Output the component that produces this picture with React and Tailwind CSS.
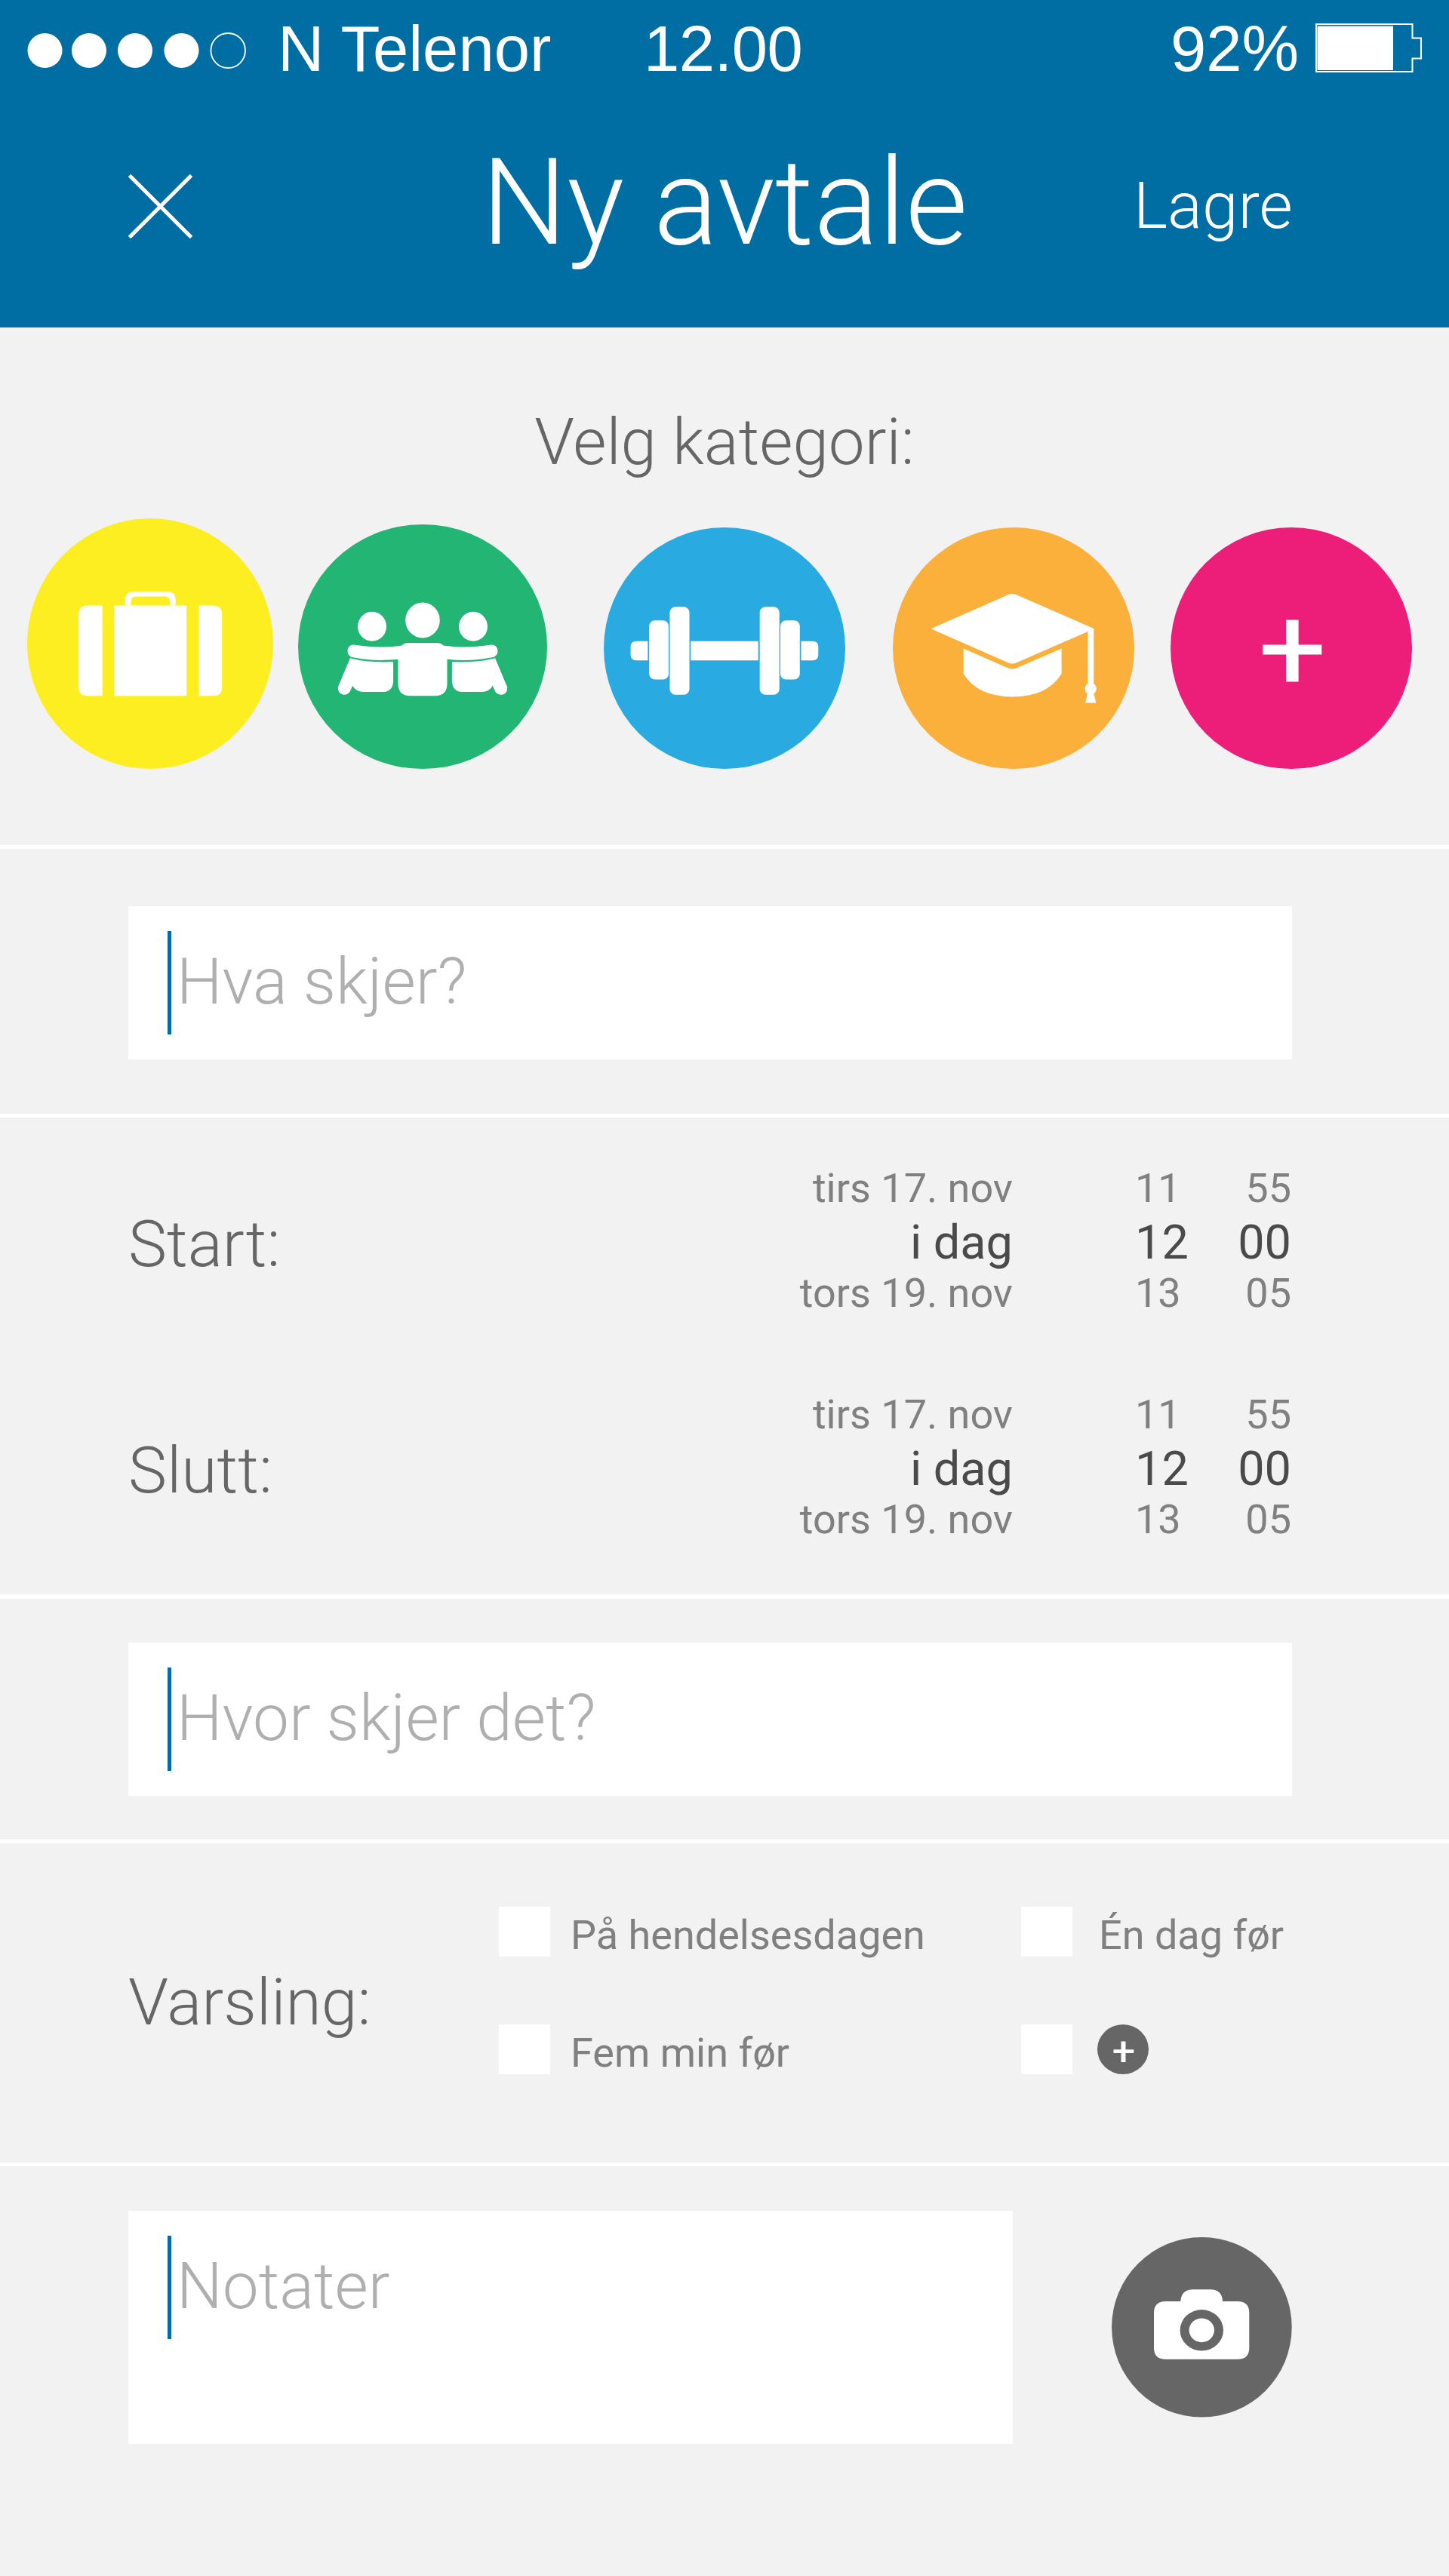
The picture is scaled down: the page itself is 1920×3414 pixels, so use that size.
const DATES = ['tirs 17. nov', 'i dag', 'tors 19. nov']
const HOURS = ['11', '12', '13']
const MINUTES = ['55', '00', '05']

export default function App() {
  return (
    <div className="w-[1920px] h-[3414px] bg-[#f2f2f2] font-['Roboto',sans-serif] text-[#666666] overflow-hidden">
      <header className="h-[434px] bg-[#006ea3] text-white">
        <StatusBar />
        <div className="flex items-start pl-[170px] pt-[80px]">
          <svg className="w-[85px] h-[85px] mt-[43px]" viewBox="0 0 85 85" stroke="#fff" strokeWidth="5">
            <path d="M1.5 1.5 83.5 83.5M83.5 1.5 1.5 83.5" />
          </svg>
          <h1 className="w-[864px] ml-[383px] mt-px font-light text-[159.5px] leading-none">Ny avtale</h1>
          <button className="mt-[43px] font-light text-[85.5px] leading-none">Lagre</button>
        </div>
      </header>

      {/* Category picker */}
      <section className="h-[691px] border-b-[5px] border-white pt-[110px]">
        <h2 className="text-center font-light text-[85.5px] leading-none">Velg kategori:</h2>
        <div className="flex items-end mt-[57px] pl-[36px]">
          <SuitcaseIcon />
          <PeopleIcon />
          <DumbbellIcon />
          <GraduationIcon />
          <AddIcon />
        </div>
      </section>

      <section className="h-[356px] border-b-[5px] border-white pt-[76px] pl-[170px]">
        <Field placeholder="Hva skjer?" />
      </section>

      {/* Start and end time */}
      <section className="h-[638px] border-b-[6px] border-white pt-[67px] pl-[170px] flex flex-col gap-[107px]">
        <TimeRow label="Start:" />
        <TimeRow label="Slutt:" />
      </section>

      <section className="h-[324px] border-b-[5px] border-white pt-[58px] pl-[170px]">
        <Field placeholder="Hvor skjer det?" />
      </section>

      {/* Reminders */}
      <section className="h-[428px] border-b-[5px] border-white pt-[84px] pl-[170px] flex items-start">
        <h2 className="w-[491px] pt-[84px] font-light text-[86px] leading-none">Varsling:</h2>
        <div className="grid grid-cols-[692px_auto] gap-y-[90px]">
          <Reminder label="På hendelsesdagen" />
          <Reminder label="Én dag før" wide />
          <Reminder label="Fem min før" />
          <div className="flex items-center gap-[33px]">
            <span className="w-[68px] h-[66px] bg-white" />
            <svg className="w-[68px] h-[66px]" viewBox="0 0 68 66">
              <ellipse cx="34" cy="33" rx="34" ry="33" fill="#666" />
              <path d="M31.5 22.5h6v10.8h10.8v4.6H37.5v12.1h-6V37.9H21.5v-4.6h10z" fill="#fff" />
            </svg>
          </div>
        </div>
      </section>

      {/* Notes */}
      <section className="pt-[59px] pl-[170px] flex items-start">
        <Field placeholder="Notater" multiline />
        <CameraIcon />
      </section>
    </div>
  )
}

function StatusBar() {
  return (
    <div className="flex items-start pt-[22px] pl-[36px] h-[108px] font-['Liberation_Sans',sans-serif] text-[85px] leading-[86px]">
      <svg className="w-[332px] h-[86px]" viewBox="36 22 332 86" fill="#fff">
        <ellipse cx="59.5" cy="67" rx="23" ry="23" />
        <ellipse cx="118" cy="67" rx="23" ry="23" />
        <ellipse cx="179" cy="67" rx="23" ry="23" />
        <ellipse cx="240.5" cy="67" rx="23" ry="23" />
        <ellipse cx="302.2" cy="67" rx="22.8" ry="23" fill="none" stroke="#fff" strokeWidth="1.8" />
      </svg>
      <span className="w-[485px]">N Telenor</span>
      <span className="w-[698px] tracking-[-0.5px]">12.00</span>
      <span className="w-[192px]">92%</span>
      <svg className="w-[142px] h-[86px]" viewBox="1743 22 142 86">
        <path d="M1744 32h127.5v18.5h11.5v27h-11.5v17.5H1744z" fill="none" stroke="#fff" strokeWidth="2" />
        <path d="M1745.5 34.5H1846v58.5H1745.5z" fill="#fff" />
      </svg>
    </div>
  )
}

function Field({ placeholder, multiline }) {
  return (
    <div className={`flex items-start pt-[33px] pl-[52px] gap-[7px] bg-white ${multiline ? 'w-[1172px] h-[309px]' : 'w-[1542px] h-[203px]'}`}>
      <span className="w-[5px] h-[137px] bg-[#006ea3]" />
      <span className="mt-[25px] font-light text-[85.5px] leading-none text-[#afafaf]">{placeholder}</span>
    </div>
  )
}

function TimeRow({ label }) {
  return (
    <div className="flex h-[193px]">
      <h2 className="w-[700px] pt-[58px] font-light text-[86px] leading-none">{label}</h2>
      <Wheel values={DATES} className="w-[472px] text-right" />
      <Wheel values={HOURS} className="w-[80px] ml-[162px]" />
      <Wheel values={MINUTES} className="w-[127px] text-right" />
    </div>
  )
}

// Three values under each other, the chosen one in the middle
function Wheel({ values, className }) {
  const [prev, current, next] = values
  return (
    <div className={className}>
      <p className="text-[54px] leading-none text-[#808080]">{prev}</p>
      <p className="mt-[13px] mb-[9px] text-[63px] leading-none text-[#4a4a4a]">{current}</p>
      <p className="text-[54px] leading-none text-[#808080]">{next}</p>
    </div>
  )
}

function Reminder({ label, wide }) {
  return (
    <div className={`flex items-center ${wide ? 'gap-[35px]' : 'gap-[27px]'}`}>
      <span className="w-[68px] h-[66px] bg-white" />
      <span className="pt-[10px] text-[54px] leading-[54px] text-[#808080]">{label}</span>
    </div>
  )
}

function SuitcaseIcon() {
  return (
    <svg className="w-[326px] h-[332px]" viewBox="36 686.5 326 332" fill="#fff">
      <ellipse cx="199" cy="852.5" rx="163" ry="166" fill="#fcee21" />
      <path d="M135.7 802v119.7H116q-11.8 0-11.8-11.8v-96q0-11.9 11.8-11.9z" />
      <path d="M151.2 802h96v119.7h-96z" />
      <path d="M263.2 802h19.2q11.8 0 11.8 11.9v96q0 11.8-11.8 11.8h-19.2z" />
      <path d="M165.8 802v-7.5q0-10.8 9.5-10.8h48q9.4 0 9.4 10.8v7.5h-7.6v-5q0-7-6.5-7h-38.5q-6.6 0-6.6 7v5z" />
    </svg>
  )
}

function PeopleIcon() {
  return (
    <svg className="w-[330px] h-[324px] ml-[33px]" viewBox="394.5 694.5 330 324" fill="#fff">
      <ellipse cx="559.5" cy="856.5" rx="165" ry="162" fill="#22b573" />
      <ellipse cx="492.5" cy="829.8" rx="19" ry="19.5" />
      <ellipse cx="559.5" cy="821.5" rx="22.8" ry="23.5" />
      <ellipse cx="626.5" cy="829.8" rx="19" ry="19.5" />
      <path d="M540 851.5h39q5 0 8 3.6 29 4.4 63.5-1.1c10.5-.8 11.7 15.3 1 16.7q-27 5.800-59.500 2.500v32.200q0 16.300-16.500 16.300h-32q-16.500 0-16.500-16.300v-32.200q-32.500 3.300-59.500-2.500c-10.700-1.400-9.500-17.500 1-16.700q34.500 5.500 63.500 1.100 3-3.600 8-3.600z" />
      <path d="M463.4 871.7q25 6.4 57.2 4.9v24.5q0 15.500-14 15.500h-25q-10.5 0-15-8.300-1.700 4.700-3.500 7.900-3.300 4.500-8.500 4-7.700-1.500-7.300-10z" />
      <path d="M655.6 871.7q-25 6.4-57.2 4.900v24.500q0 15.500 14 15.500h25q10.500 0 15-8.300 1.700 4.700 3.500 7.900 3.300 4.500 8.500 4 7.700-1.500 7.300-10z" />
    </svg>
  )
}

function DumbbellIcon() {
  return (
    <svg className="w-[320px] h-[320px] ml-[75px]" viewBox="800 698.5 320 320" fill="#fff">
      <circle cx="960" cy="858.5" r="160" fill="#29abe2" />
      <path d="M858.4 849.2v25.5h-15.3q-7.5 0-7.5-7.5v-10.5q0-7.5 7.5-7.500z" />
      <rect x="860.2" y="821.7" width="25.8" height="78.3" rx="7.5" />
      <rect x="887.5" y="803.7" width="26" height="116.5" rx="7.5" />
      <path d="M915.2 849.2h89.5v25.5h-89.5z" />
      <rect x="1006.7" y="803.7" width="26" height="116.5" rx="7.5" />
      <rect x="1034" y="821.7" width="25.8" height="78.3" rx="7.5" />
      <path d="M1061.5 849.2v25.5h15.3q7.5 0 7.5-7.5v-10.5q0-7.5-7.5-7.500z" />
    </svg>
  )
}

function GraduationIcon() {
  return (
    <svg className="w-[320px] h-[320px] ml-[63px]" viewBox="1183 698.5 320 320" fill="#fff">
      <circle cx="1343" cy="858.5" r="160" fill="#fbb03b" />
      <path d="M1233.6 832.8l102-45q5.600-2.500 11.300 0l102.400 44.600v72.800h-7.800v-68.800l-94.600 41.400q-5.600 2.500-11.300 0z" />
      <path d="M1276.7 858.9l58.7 25.800q5.800 2.500 11.700 0l59.500-25.800v33.600q-19 30.400-65 30.400t-64.900-30.400z" />
      <ellipse cx="1445.2" cy="912.3" rx="7.6" ry="7.7" />
      <path d="M1441.3 917h7.8l3.2 13.9h-14.2z" />
    </svg>
  )
}

function AddIcon() {
  return (
    <svg className="w-[320px] h-[320px] ml-[48px]" viewBox="1551 698.5 320 320" fill="#fff">
      <circle cx="1711" cy="858.5" r="160" fill="#ed1e79" />
      <path d="M1704.3 821h16.3v33h30.7v13h-30.7v36h-16.3v-36h-31.2v-13h31.2z" />
    </svg>
  )
}

function CameraIcon() {
  return (
    <svg className="w-[239px] h-[239px] mt-[35px] ml-[131px]" viewBox="1473 2965 239 239" fill="#fff">
      <circle cx="1592.4" cy="3084.3" r="119.3" fill="#666" />
      <path d="M1544.5 3050h19.8q1-15.700 16.500-15.700h23q15.500 0 16.300 15.700h19.800q15.400 0 15.400 15.500v46q0 15.300-15.400 15.300h-95.400q-15.500 0-15.500-15.300v-46q0-15.500 15.500-15.500z" />
      <ellipse cx="1592.3" cy="3088.3" rx="28.7" ry="27.2" fill="#666" />
      <ellipse cx="1592.3" cy="3088.3" rx="16.7" ry="15.9" />
    </svg>
  )
}
